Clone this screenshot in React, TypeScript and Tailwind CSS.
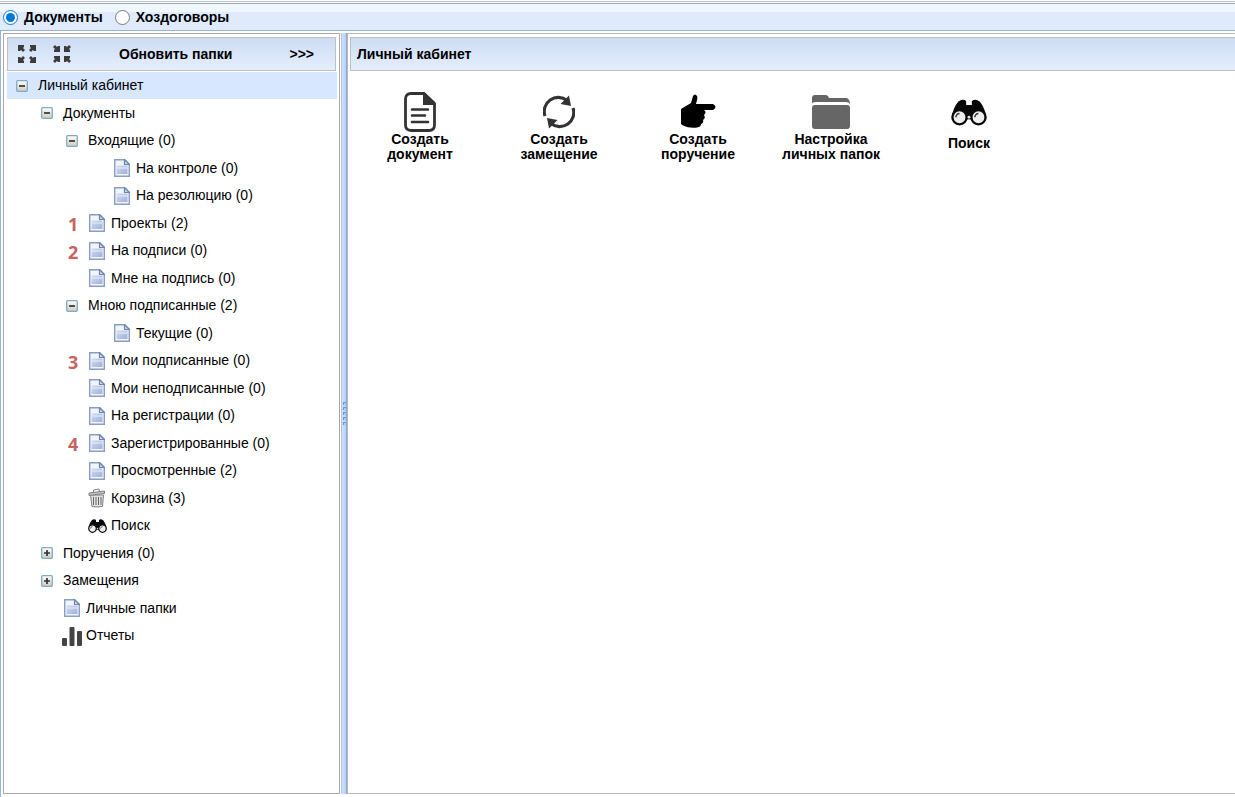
import { useState } from 'react';
import type { ReactNode } from 'react';

type IconName = 'page' | 'trash' | 'search' | 'chart';

interface TreeNode {
  label: string;
  level: number;
  toggle?: 'open' | 'closed';
  icon?: IconName;
  mark?: number;
}

const TREE: TreeNode[] = [
  { label: 'Личный кабинет', level: 0, toggle: 'open' },
  { label: 'Документы', level: 1, toggle: 'open' },
  { label: 'Входящие (0)', level: 2, toggle: 'open' },
  { label: 'На контроле (0)', level: 4, icon: 'page' },
  { label: 'На резолюцию (0)', level: 4, icon: 'page' },
  { label: 'Проекты (2)', level: 3, icon: 'page', mark: 1 },
  { label: 'На подписи (0)', level: 3, icon: 'page', mark: 2 },
  { label: 'Мне на подпись (0)', level: 3, icon: 'page' },
  { label: 'Мною подписанные (2)', level: 2, toggle: 'open' },
  { label: 'Текущие (0)', level: 4, icon: 'page' },
  { label: 'Мои подписанные (0)', level: 3, icon: 'page', mark: 3 },
  { label: 'Мои неподписанные (0)', level: 3, icon: 'page' },
  { label: 'На регистрации (0)', level: 3, icon: 'page' },
  { label: 'Зарегистрированные (0)', level: 3, icon: 'page', mark: 4 },
  { label: 'Просмотренные (2)', level: 3, icon: 'page' },
  { label: 'Корзина (3)', level: 3, icon: 'trash' },
  { label: 'Поиск', level: 3, icon: 'search' },
  { label: 'Поручения (0)', level: 1, toggle: 'closed' },
  { label: 'Замещения', level: 1, toggle: 'closed' },
  { label: 'Личные папки', level: 2, icon: 'page' },
  { label: 'Отчеты', level: 2, icon: 'chart' },
];

const TOGGLE_INDENT = ['pl-[9px]', 'pl-[34px]', 'pl-[59px]'];
const ICON_INDENT = ['pl-0', 'pl-[29px]', 'pl-[54px]', 'pl-[79px]', 'pl-[104px]'];

function PageIcon() {
  return (
    <svg width="16" height="18" viewBox="0 0 16 18">
      <defs>
        <linearGradient id="page-fill" x1="0" y1="0" x2="1" y2="1">
          <stop offset="0" stopColor="#d3def2" />
          <stop offset="1" stopColor="#9fb0da" />
        </linearGradient>
      </defs>
      <path d="M.7.7h10l4.600 4.600v12H.7z" fill="#f1f5fd" stroke="#8b9dc2" strokeWidth="1.4" />
      <path d="M2.500 6.500h11V15h-11z" fill="url(#page-fill)" />
      <path d="M2.500 9h11" stroke="#e8eef9" />
      <path d="M10.500.7v4.800h4.800z" fill="#cfdaed" stroke="#6d83b0" strokeWidth="1.2" />
    </svg>
  );
}

function TrashIcon() {
  return (
    <svg width="18" height="20" viewBox="0 0 18 20" fill="none" stroke="#808080">
      <path d="M2.5 7h13l-1 11.500q-5 1-10.500 0z" fill="#e2e2e2" />
      <path d="M5.500 9v8M8 9v8M10.500 9v8M13 9v8" stroke="#666" />
      <path d="M1 5 16.500 3v2.500L1 7.500z" fill="#c4c4c4" />
      <path d="M5.500 4V2l5.500-1 .5 2.500" />
    </svg>
  );
}

function BinocularsIcon({ className }: { className: string }) {
  return (
    <svg className={className} viewBox="0 0 38 28">
      <path d="M10 1q4-1 6 1v4h6V2q2-2 6-1 5 2 9 15l-7 5H8l-7-5Q5 3 10 1z" fill="#080808" />
      <circle cx="9" cy="19" r="7.5" fill="#eee" stroke="#080808" strokeWidth="2.5" />
      <circle cx="29" cy="19" r="7.5" fill="#eee" stroke="#080808" strokeWidth="2.5" />
      <path d="M5 19q1-4 4-4M25 19q1-4 4-4" fill="none" stroke="#333" strokeWidth="1.5" />
      <path d="M16 14h6v7h-6z" fill="#080808" />
      <circle cx="19" cy="19" r="1.5" fill="#ddd" />
    </svg>
  );
}

function ChartIcon() {
  return (
    <svg width="20" height="20" viewBox="0 0 20 20" fill="#444">
      <rect y="12" width="5" height="8" rx="1" />
      <rect x="7.5" y="1" width="5" height="19" rx="1" />
      <rect x="15" y="5" width="5" height="15" rx="1" />
    </svg>
  );
}

function NodeIcon({ name }: { name: IconName }) {
  if (name === 'trash') return <TrashIcon />;
  if (name === 'search') return <BinocularsIcon className="h-[14px] w-[19px]" />;
  if (name === 'chart') return <ChartIcon />;
  return <PageIcon />;
}

function ToggleIcon({ open }: { open: boolean }) {
  return (
    <svg width="12" height="12" viewBox="0 0 12 12">
      <defs>
        <linearGradient id="toggle-fill" x1="0" y1="0" x2="0" y2="1">
          <stop offset="0" stopColor="#fff" />
          <stop offset="1" stopColor="#cfcabd" />
        </linearGradient>
      </defs>
      <rect x=".7" y=".7" width="10.6" height="10.6" rx="1" fill="url(#toggle-fill)" stroke="#7fabc4" strokeWidth="1.3" />
      <path d={open ? 'M3 6h6' : 'M3 6h6M6 3v6'} stroke="#333" strokeWidth="1.7" />
    </svg>
  );
}

// Arrow head in the top-left corner, the other three are rotations of it
const ARROW = 'M0 0h6v2L5 3l2 2-2 2-2-2-1 1H0z';

function ExpandIcon() {
  return (
    <svg width="18" height="18" viewBox="0 0 18 18" fill="#3c3c3c">
      <path d={ARROW} />
      <path d={ARROW} transform="translate(18) rotate(90)" />
      <path d={ARROW} transform="translate(18 18) rotate(180)" />
      <path d={ARROW} transform="translate(0 18) rotate(270)" />
    </svg>
  );
}

function CollapseIcon() {
  return (
    <svg width="18" height="18" viewBox="0 0 18 18" fill="#3c3c3c">
      <path d={ARROW} transform="translate(7 7) rotate(180)" />
      <path d={ARROW} transform="translate(11 7) rotate(270)" />
      <path d={ARROW} transform="translate(11 11)" />
      <path d={ARROW} transform="translate(7 11) rotate(90)" />
    </svg>
  );
}

const ACTIONS: { lines: string[]; icon: ReactNode }[] = [
  {
    lines: ['Создать', 'документ'],
    icon: (
      <svg width="32" height="40" viewBox="0 0 32 40">
        <path
          d="M7 1.5h13l10.500 10V33q0 5.500-5.500 5.500H7Q1.500 38.500 1.500 33V7q0-5.500 5.500-5.500z"
          fill="#fff"
          stroke="#333"
          strokeWidth="2.8"
        />
        <path d="M19 1h2l10 9v3H19z" fill="#333" />
        <path d="M8 17.500h16M8 23.500h13M8 30h16" stroke="#333" strokeWidth="2.6" strokeLinecap="round" />
      </svg>
    ),
  },
  {
    lines: ['Создать', 'замещение'],
    icon: (
      <svg width="32" height="40" viewBox="0 0 32 40" fill="none" stroke="#333" strokeWidth="3.2">
        <path d="M2 24A14 14 0 0 1 24 8.500M30 16A14 14 0 0 1 8 31.500" />
        <path d="m26 3.500 2 10.500-10.500-2zM6 36.500 4 26l10.500 2z" fill="#333" stroke="none" />
      </svg>
    ),
  },
  {
    lines: ['Создать', 'поручение'],
    icon: (
      <svg width="36" height="40" viewBox="0 0 36 40">
        <path d="M1 17l10-6 2-7q2-3 4 0 1 2-1 8h17q5 3 0 6h-9q3 2 0 5 2 3-1 5 1 3-2 4 0 3-4 3.500-8 1-14-2l-2-1.500z" />
      </svg>
    ),
  },
  {
    lines: ['Настройка', 'личных папок'],
    icon: (
      <svg width="40" height="40" viewBox="0 0 40 40" fill="#666">
        <path d="M1 10V6q0-3 3-3h11q2 0 3 3h17q3 0 4 5v1q-1-2-4-2H5q-4 0-4 2z" />
        <rect x="1" y="13" width="38" height="24" rx="3" />
      </svg>
    ),
  },
  {
    lines: ['Поиск'],
    icon: (
      <span className="flex h-11 items-start pt-[7px]">
        <BinocularsIcon className="h-[27px] w-[36px]" />
      </span>
    ),
  },
];

function TreeRow({ node, selected, onSelect }: { node: TreeNode; selected: boolean; onSelect: () => void }) {
  const indent = node.toggle ? TOGGLE_INDENT[node.level] : ICON_INDENT[node.level];

  return (
    <li className={`relative odd:h-[27px] even:h-[28px] ${selected ? 'bg-[#d6e7ff]' : ''}`}>
      {node.mark && (
        <span className="absolute top-px left-[61px] font-['Open_Sans',sans-serif] text-[18px] leading-[28px] font-bold text-[#c8625e]">
          {node.mark}
        </span>
      )}
      <button type="button" onClick={onSelect} className={`flex h-full w-full items-center text-left ${indent}`}>
        {node.toggle ? (
          <span className="mr-[10px] shrink-0">
            <ToggleIcon open={node.toggle === 'open'} />
          </span>
        ) : (
          <span className="mr-[3px] flex w-[22px] shrink-0 justify-center">
            <NodeIcon name={node.icon ?? 'page'} />
          </span>
        )}
        <span className="whitespace-nowrap">{node.label}</span>
      </button>
    </li>
  );
}

export default function App() {
  const [section, setSection] = useState('docs');
  const [selected, setSelected] = useState(0);

  return (
    <div className="flex min-h-screen flex-col bg-white font-['Liberation_Sans',Arial,sans-serif] text-[14px] text-black">
      <div className="mt-px h-[3px] border-y border-t-[#c3c3c3] border-b-[#8fabc8]" />
      <header className="flex h-[27px] items-center gap-3 border-b border-[#99b3d1] bg-linear-to-b from-[#f0f7ff] from-30% to-[#dfebfd] to-30% pl-[3px] font-bold">
        <label className="flex items-center gap-[6px]">
          <input
            type="radio"
            name="section"
            className="size-[15px] accent-[#0078d7]"
            checked={section === 'docs'}
            onChange={() => setSection('docs')}
          />
          Документы
        </label>
        <label className="flex items-center gap-[6px]">
          <input
            type="radio"
            name="section"
            className="size-[15px] accent-[#0078d7]"
            checked={section === 'contracts'}
            onChange={() => setSection('contracts')}
          />
          Хоздоговоры
        </label>
      </header>

      <div className="flex flex-1 border-l border-[#99b3d9] pt-[2px] pb-[3px] pl-[2px]">
        <aside className="w-[337px] shrink-0 border border-[#a9a9a9] p-[3px] pr-[2px]">
          <div className="mr-px flex h-[34px] items-center border border-[#c0c0c0] bg-linear-to-b from-[#cddcf4] to-[#e5eefd] pl-[10px] font-bold">
            <button type="button" aria-label="Развернуть все">
              <ExpandIcon />
            </button>
            <button type="button" aria-label="Свернуть все" className="ml-[17px]">
              <CollapseIcon />
            </button>
            <button type="button" className="ml-12">
              Обновить папки
            </button>
            <button type="button" className="mr-[21px] ml-auto">
              &gt;&gt;&gt;
            </button>
          </div>
          <ul className="mt-px">
            {TREE.map((node, i) => (
              <TreeRow key={i} node={node} selected={i === selected} onSelect={() => setSelected(i)} />
            ))}
          </ul>
        </aside>

        <div className="ml-px flex w-[6px] shrink-0 cursor-col-resize flex-col items-center justify-center gap-[2px] border-x border-l-[#b4c4dd] border-r-[#8aabdc] bg-linear-to-r from-[#cfe1fc] to-[#b4d0fa]">
          {[0, 1, 2, 3, 4].map((i) => (
            <span key={i} className="size-[3px] border-t border-l border-[#6f9ad8] bg-[#a9c8f3]" />
          ))}
        </div>

        <main className="min-w-0 flex-1 border-y border-l border-[#b8b8b8] pt-[3px] pl-[2px]">
          <h1 className="flex h-[34px] items-center border border-r-0 border-[#c0c0c0] bg-linear-to-b from-[#cddcf4] to-[#e5eefd] pl-[6px] font-bold">
            Личный кабинет
          </h1>
          <div className="grid grid-cols-[138px_140px_138px_128px_148px] pt-[21px] pl-px">
            {ACTIONS.map((action) => (
              <button
                key={action.lines.join(' ')}
                type="button"
                className="flex flex-col items-center self-start font-bold leading-[15px]"
              >
                {action.icon}
                {action.lines.map((line) => (
                  <span key={line}>{line}</span>
                ))}
              </button>
            ))}
          </div>
        </main>
      </div>
    </div>
  );
}
